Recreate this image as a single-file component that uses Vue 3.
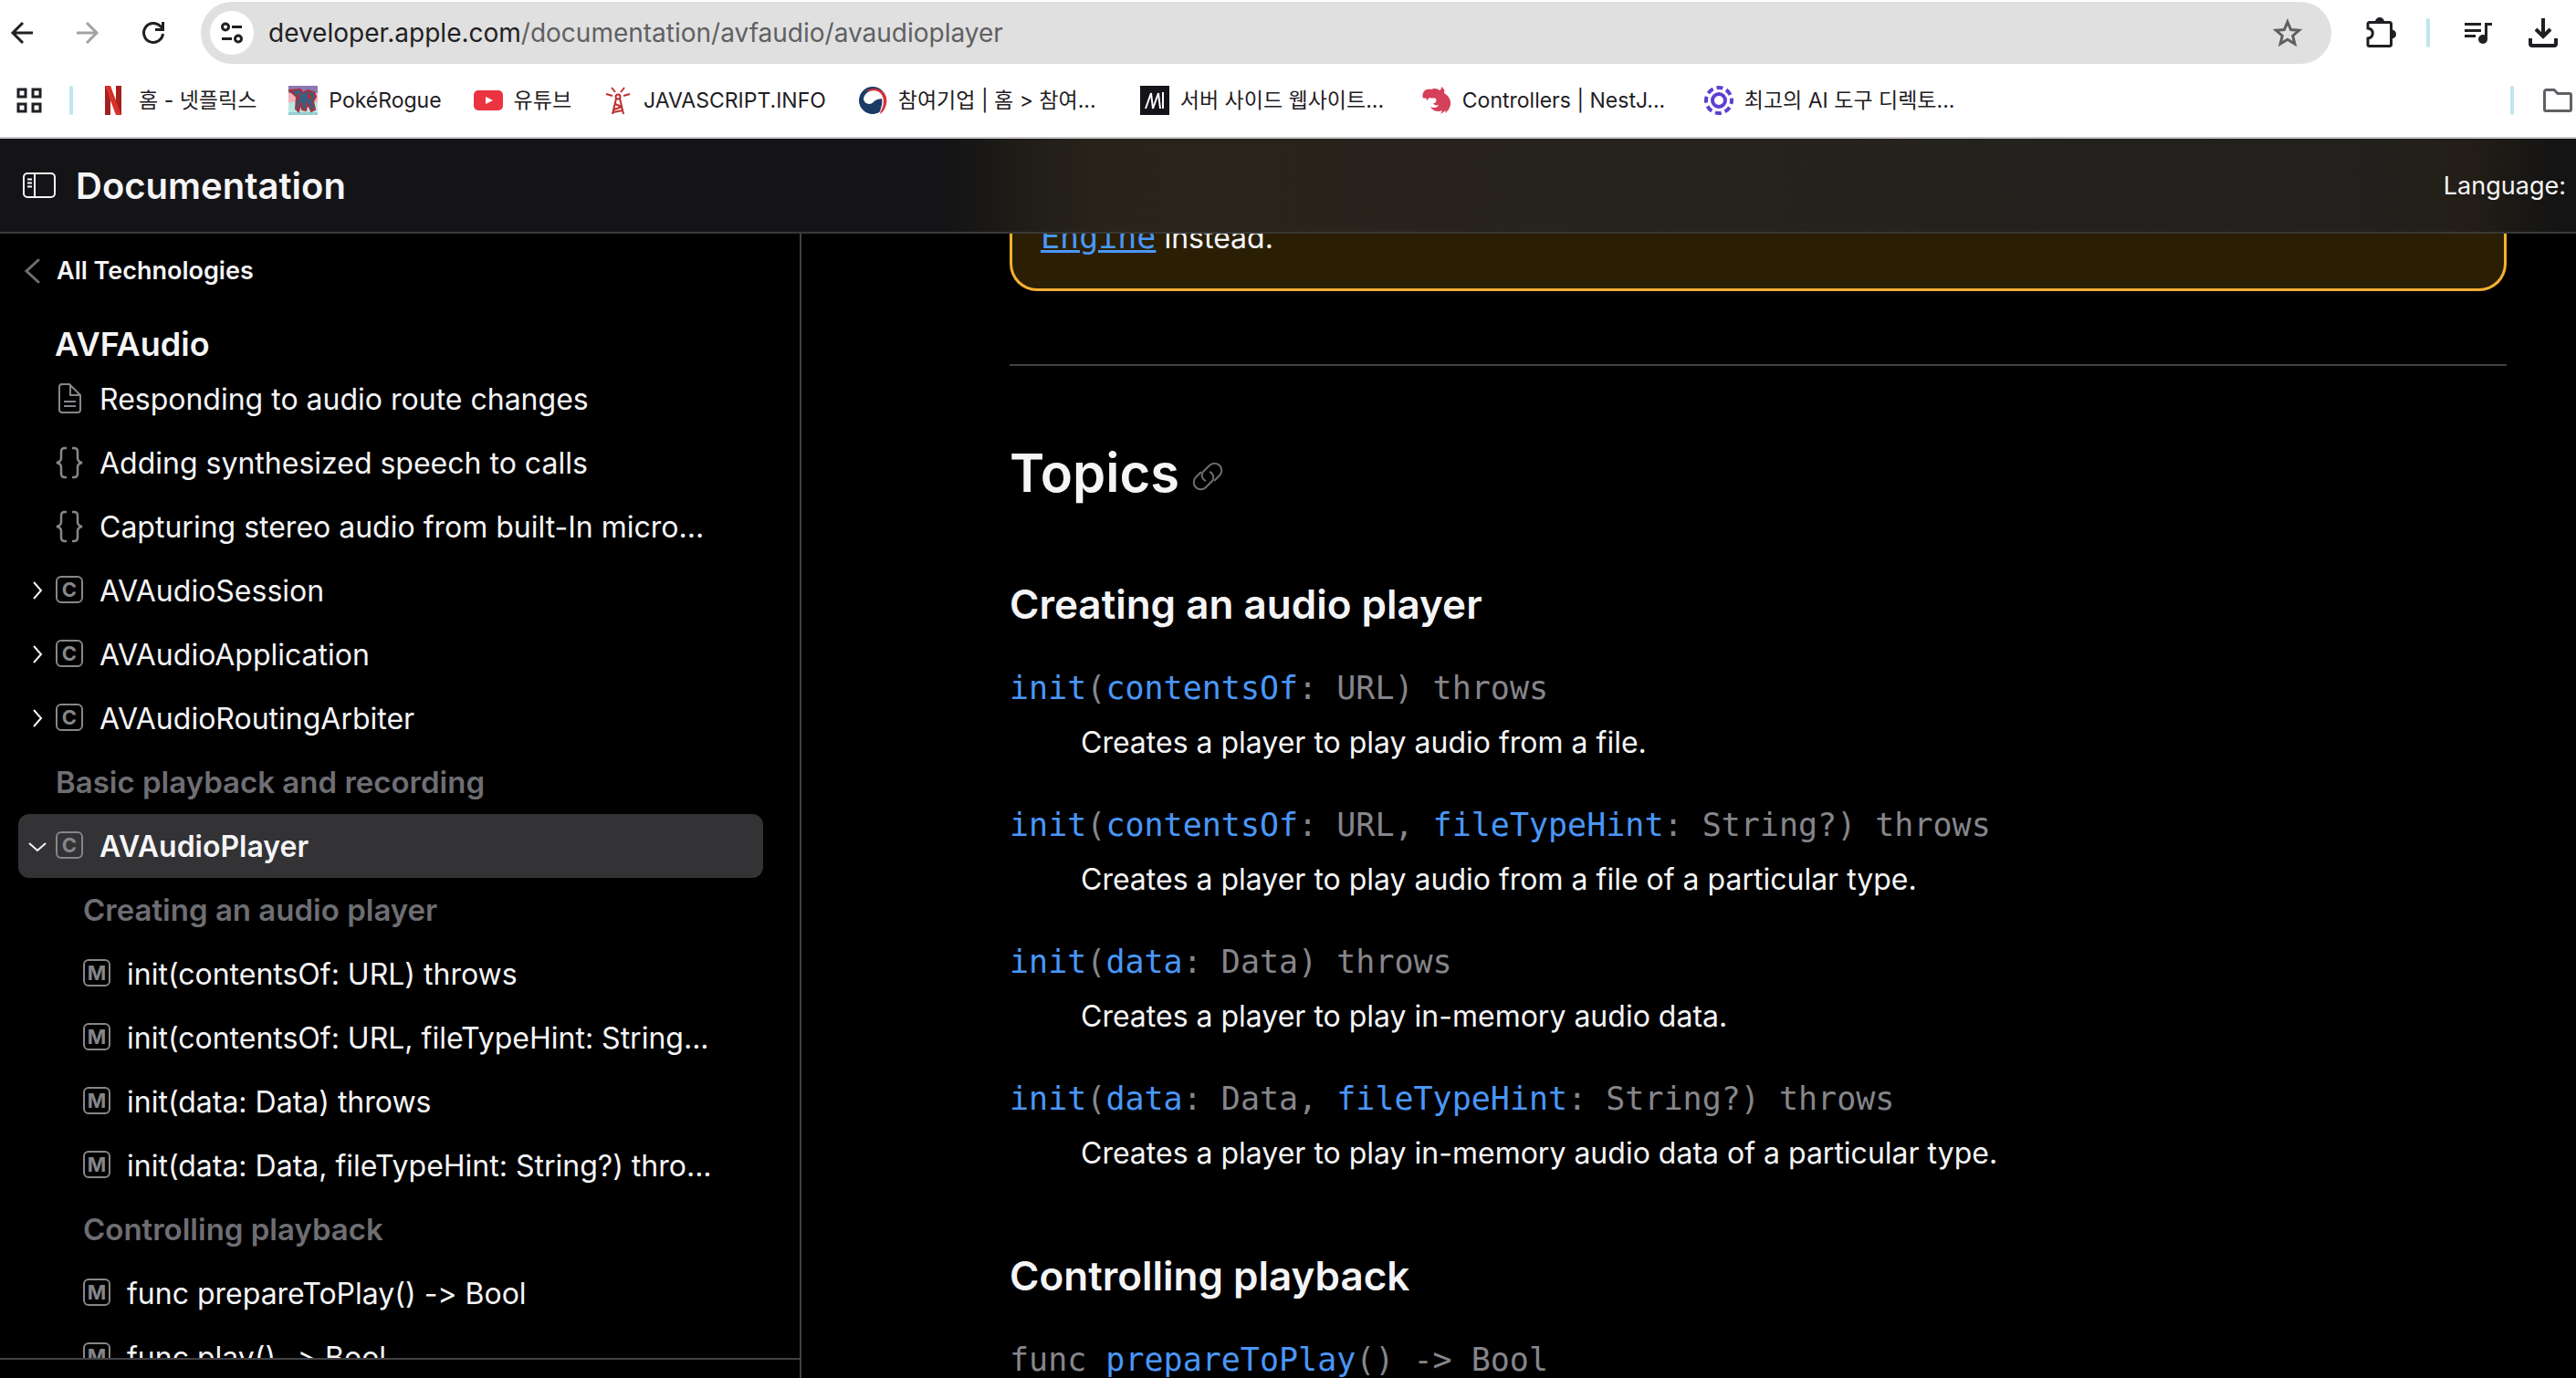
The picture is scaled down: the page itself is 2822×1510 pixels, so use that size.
<script setup>
    import { reactive } from 'vue';
    const bookmarks = [
        { icon: 'netflix', title: '홈 - 넷플릭스' },
        { icon: 'poke', title: 'PokéRogue' },
        { icon: 'youtube', title: '유튜브' },
        { icon: 'tower', title: 'JAVASCRIPT.INFO' },
        { icon: 'gov', title: '참여기업 | 홈 > 참여...', long: true },
        { icon: 'mdn', title: '서버 사이드 웹사이트...', long: true },
        { icon: 'nest', title: 'Controllers | NestJ...', long: true },
        { icon: 'ai', title: '최고의 AI 도구 디렉토...', long: true },
    ]

    const nav = reactive([
        { type: 'article', title: 'Responding to audio route changes' },
        { type: 'sample', title: 'Adding synthesized speech to calls' },
        { type: 'sample', title: 'Capturing stereo audio from built-In micro...' },
        { type: 'class', title: 'AVAudioSession', open: false },
        { type: 'class', title: 'AVAudioApplication', open: false },
        { type: 'class', title: 'AVAudioRoutingArbiter', open: false },
        { type: 'group', title: 'Basic playback and recording' },
        { type: 'class', title: 'AVAudioPlayer', open: true, active: true },
        { type: 'group', title: 'Creating an audio player', nested: true },
        { type: 'method', title: 'init(contentsOf: URL) throws', nested: true },
        { type: 'method', title: 'init(contentsOf: URL, fileTypeHint: String...', nested: true },
        { type: 'method', title: 'init(data: Data) throws', nested: true },
        { type: 'method', title: 'init(data: Data, fileTypeHint: String?) thro...', nested: true },
        { type: 'group', title: 'Controlling playback', nested: true },
        { type: 'method', title: 'func prepareToPlay() -> Bool', nested: true },
        { type: 'method', title: 'func play() -> Bool', nested: true },
    ])

    // tokens starting with * are identifiers
    const topics = [
        {
            title: 'Creating an audio player',
            items: [
                { code: ['*init', '(', '*contentsOf', ': URL) throws'], text: 'Creates a player to play audio from a file.' },
                { code: ['*init', '(', '*contentsOf', ': URL, ', '*fileTypeHint', ': String?) throws'], text: 'Creates a player to play audio from a file of a particular type.' },
                { code: ['*init', '(', '*data', ': Data) throws'], text: 'Creates a player to play in-memory audio data.' },
                { code: ['*init', '(', '*data', ': Data, ', '*fileTypeHint', ': String?) throws'], text: 'Creates a player to play in-memory audio data of a particular type.' },
            ]
        },
        {
            title: 'Controlling playback',
            items: [
                { code: ['func ', '*prepareToPlay', '() -> Bool'] },
            ]
        },
    ]
</script>
<template>
    <div class="browser">
        <div class="toolbar">
            <button class="tool" aria-label="Back">
                <svg width="32" height="32" viewBox="0 0 32 32" fill="none" stroke="#1f2023" stroke-width="3"><path d="M28 16H6M17 5L6 16l11 11" /></svg>
            </button>
            <button class="tool" aria-label="Forward">
                <svg width="32" height="32" viewBox="0 0 32 32" fill="none" stroke="#a3a3a3" stroke-width="3"><path d="M4 16h22M15 5l11 11-11 11" /></svg>
            </button>
            <button class="tool" aria-label="Reload">
                <svg width="32" height="32" viewBox="0 0 32 32" fill="none" stroke="#1f2023" stroke-width="3"><path d="M26.500 17a10.500 10.500 0 1 1-3-8.500l3 3" /><path d="M26.500 4v8.500H18" /></svg>
            </button>
            <div class="omnibox">
                <button class="site-info" aria-label="View site information">
                    <svg width="28" height="28" viewBox="0 0 28 28" fill="none" stroke="#1f2023" stroke-width="3"><circle cx="7" cy="7.500" r="3.500" /><path d="M14 7.500h11M3 20.500h11" /><circle cx="21" cy="20.500" r="3.500" /></svg>
                </button>
                <div class="url" role="textbox" aria-label="Address" contenteditable spellcheck="false">developer.apple.com<span>/documentation/avfaudio/avaudioplayer</span></div>
                <button class="star" aria-label="Bookmark this tab">
                    <svg width="36" height="36" viewBox="0 0 36 36" fill="none" stroke="#5f6063" stroke-width="3"><path d="M18 6l3.600 8.600 9 .7-6.900 5.900 2.200 8.800-7.900-4.800-7.900 4.800 2.200-8.800-6.900-5.900 9-.7z" /></svg>
                </button>
            </div>
            <button class="tool" aria-label="Extensions">
                <svg width="36" height="36" viewBox="0 0 36 36"><path d="M5 6.500h23a1.500 1.500 0 0 1 1.500 1.500v23a1.500 1.500 0 0 1-1.500 1.500H5.500A1.500 1.500 0 0 1 4 31v-7c7-1 7-10 0-11V8a1.500 1.500 0 0 1 1.500-1.500z" fill="none" stroke="#1f2023" stroke-width="3" /><path d="M12 6a5 5 0 0 1 10 0zM30 14.500a5 5 0 0 1 0 10z" fill="#1f2023" /></svg>
            </button>
            <i class="bar"></i>
            <button class="tool" aria-label="Media controls">
                <svg width="32" height="26" viewBox="0 0 32 26" fill="none" stroke="#1f2023" stroke-width="3"><path d="M2 3.500h18M2 10.500h18M2 16.500h12M25.500 20V3.500H32" /><circle cx="22" cy="20" r="5" fill="#1f2023" stroke="none" /></svg>
            </button>
            <button class="tool" aria-label="Downloads">
                <svg width="32" height="34" viewBox="0 0 32 34" fill="none" stroke="#1f2023" stroke-width="4"><path d="M16 1v20M8 13l8 8 8-8M2 23v6a2 2 0 0 0 2 2h24a2 2 0 0 0 2-2v-6" /></svg>
            </button>
        </div>
        <div class="bookmarks">
            <button class="apps" aria-label="Tab groups">
                <svg width="28" height="28" viewBox="0 0 28 28" fill="none" stroke="#1f2023" stroke-width="3"><path d="M2 2h8v8H2zM18 2h8v8h-8zM2 18h8v8H2zM18 18h8v8h-8z" /></svg>
            </button>
            <i class="bar"></i>
            <a v-for="b in bookmarks" :key="b.icon" href="#" class="bookmark">
                <svg v-if="b.icon === 'netflix'" width="32" height="32" viewBox="0 0 32 32"><path d="M7 0h6v32H7zM19 0h6v32h-6z" fill="#a3201f" /><path d="M7 0h6l12 32h-6z" fill="#d6312a" /></svg>
                <svg v-else-if="b.icon === 'poke'" width="32" height="32" viewBox="0 0 32 32"><path d="M0 0h32v8H0z" fill="#8d78b4" /><path d="M0 8h32v10H0z" fill="#f0b3b8" /><path d="M0 18h32v14H0z" fill="#b9e9e2" /><path d="M0 29h32v3H0z" fill="#93cfd4" /><path d="M1 5l12-1 3 4 5-3 7 2 2 5-3 5 2 9-4 2-4-9-2 8-4-1-1-8-3 10-3-3 1-13z" fill="#386082" stroke="#a8303c" stroke-width="2" /><path d="M12 8l-1 7M22 9l3 3-3 2z" stroke="#a8303c" fill="none" stroke-width="2" /></svg>
                <svg v-else-if="b.icon === 'youtube'" width="32" height="32" viewBox="0 0 32 32"><rect y="5" width="32" height="22" rx="5" fill="#eb3440" /><path d="M13 12l8 4-8 4z" fill="#fff" /></svg>
                <svg v-else-if="b.icon === 'tower'" width="32" height="32" viewBox="0 0 32 32" fill="none" stroke="#be2f2f" stroke-width="2"><circle cx="16" cy="12" r="2.500" /><path d="M14 14l-4 17M18 14l4 17M13 20l7 3M12 26l8-3M11 29l10-2M9 2l4 5M23 2l-4 5M3 9l7 2M29 9l-7 2" /></svg>
                <svg v-else-if="b.icon === 'gov'" width="32" height="32" viewBox="0 0 32 32"><circle cx="16" cy="16" r="15" fill="#1b3a66" /><path d="M8 6C20-2 34 7 31 20c-1 5-4 9-7 11 3-9 3-17-1-22-4-4-9-4-15-3z" fill="#d8313d" /><path d="M6 14C8 5 20 2 26 10c4 7 1 16-3 20 3-6 4-12 0-14-6-2-5 4-11 4-3 0-6-3-6-6z" fill="#fff" /><path d="M26 14c2 8-3 14-9 17-4 0-9-2-12-6l2-6 8 2 6-6z" fill="#1b3a66" /></svg>
                <svg v-else-if="b.icon === 'mdn'" width="32" height="32" viewBox="0 0 32 32"><path d="M0 0h32v32H0z" fill="#15141a" /><path d="M6 25L12 8l2 17L20 8l2 17M25 7v18" fill="none" stroke="#fff" stroke-width="2" /></svg>
                <svg v-else-if="b.icon === 'nest'" width="32" height="32" viewBox="0 0 32 32"><path d="M21 1c3 2 4 4 3 7 5 3 8 8 7 13-1 4-3 7-6 9l1-3-6 4 2-4c-5 2-10 1-13-4 4 2 8 1 9-2-3 1-5 0-6-2 3 0 4-2 3-5-2-1-5 0-7-1l-3 3-1-3-2 1c-2-1-2-4-1-6C2 4 6 3 10 4c3-2 7-1 9 1 2-1 2-2 2-4z" fill="#d5405a" /></svg>
                <svg v-else width="32" height="32" viewBox="0 0 32 32" fill="none" stroke="#5d3fd3"><circle cx="16" cy="16" r="7" stroke-width="4" /><circle cx="16" cy="16" r="14" stroke-width="4" stroke-dasharray="7 4" stroke-dashoffset="3" /></svg>
                <span class="bookmark-title" :class="{ long: b.long }">{{ b.title }}</span>
            </a>
            <i class="bar push"></i>
            <button aria-label="All bookmarks">
                <svg width="32" height="26" viewBox="0 0 32 26" fill="none" stroke="#606165" stroke-width="3"><path d="M3.500 1.500H12l4 4h13a1.500 1.500 0 0 1 1.500 1.500v16a1.500 1.500 0 0 1-1.500 1.500H3A1.500 1.500 0 0 1 1.500 23V3.500a2 2 0 0 1 2-2z" /></svg>
            </button>
        </div>

        <header class="doc-header">
            <button aria-label="Toggle sidebar">
                <svg width="36" height="28" viewBox="0 0 36 28" fill="none" stroke="#f5f5f7" stroke-width="2"><rect x="1" y="1" width="34" height="26" rx="4" /><path d="M13 1v26M5 7.500h5M5 11.500h5M5 15.500h5" /></svg>
            </button>
            <a href="#" class="doc-title">Documentation</a>
            <span class="language">Language:</span>
        </header>

        <div class="doc-body">
            <aside class="sidebar">
                <a href="#" class="back">
                    <svg width="18" height="30" viewBox="0 0 18 30" fill="none" stroke="#6e6e73" stroke-width="3" stroke-linecap="round"><path d="M16 3L3 15l13 12" /></svg>
                    All Technologies
                </a>
                <h2 class="module">AVFAudio</h2>
                <ul class="nav">
                    <li v-for="(item, index) in nav" :key="index" :class="{ active: item.active, nested: item.nested }">
                        <button v-if="item.type === 'class'" class="disclosure" :aria-label="'Toggle ' + item.title" :aria-expanded="item.open" @click="item.open = !item.open">
                            <svg width="20" height="20" viewBox="0 0 20 20" fill="none" stroke="#f5f5f7" stroke-width="2"><path :d="item.open ? 'M1 7l9 8 9-8' : 'M6 1l8 9-8 9'" /></svg>
                        </button>
                        <h3 v-if="item.type === 'group'">{{ item.title }}</h3>
                        <a v-else href="#">
                            <svg v-if="item.type === 'article'" class="glyph" viewBox="0 0 30 36"><path d="M7 2h8l12 12v16a3 3 0 0 1-3 3H7a3 3 0 0 1-3-3V5a3 3 0 0 1 3-3zM16 2v12h11M9 21h13M9 26h13" /></svg>
                            <svg v-else-if="item.type === 'sample'" class="glyph" viewBox="0 0 30 36"><path stroke-width="2.500" d="M12 2h-2Q6 2 6 6v7q0 4-5 5 5 1 5 5v7q0 4 4 4h2M18 2h2q4 0 4 4v7q0 4 5 5-5 1-5 5v7q0 4-4 4h-2" /></svg>
                            <svg v-else class="glyph" viewBox="0 0 30 36">
                                <rect x="1" y="3" width="28" height="28" rx="5" />
                                <text x="15" y="25" text-anchor="middle">{{ item.type === 'class' ? 'C' : 'M' }}</text>
                            </svg>
                            <span>{{ item.title }}</span>
                        </a>
                    </li>
                </ul>
                <div class="filter"></div>
            </aside>
            <main class="content">
                <p class="callout"><a href="#">Engine</a> instead.</p>
                <hr>
                <h2>Topics
                    <a href="#" aria-label="Link to Topics"><svg width="34" height="34" viewBox="0 0 34 34" fill="none" stroke="#6e6e73" stroke-width="2"><path d="M15 22a6.500 6.500 0 0 1-3-10l7-7a7.700 7.700 0 0 1 11 11l-6 6" /><path d="M19 12a6.500 6.500 0 0 1 3 10l-7 7A7.700 7.700 0 0 1 4 18l6-6" /></svg></a>
                </h2>
                <section v-for="topic in topics" :key="topic.title">
                    <h3>{{ topic.title }}</h3>
                    <div v-for="(item, index) in topic.items" :key="index" class="symbol">
                        <a href="#"><code><span v-for="(token, i) in item.code" :key="i" :class="{ ident: token[0] === '*' }">{{ token.replace('*', '') }}</span></code></a>
                        <p v-if="item.text">{{ item.text }}</p>
                    </div>
                </section>
            </main>
        </div>
    </div>
</template>

<style>
    body {
        background: #000;
        overflow: hidden;
    }
</style>

<style scoped>
    *
    {
        box-sizing: border-box;
        margin: 0;
        padding: 0;
    }

    a { color: inherit; text-decoration: none; }
    svg { display: block; flex: none; }
    button { background: none; border: 0; cursor: pointer; display: flex; align-items: center; justify-content: center; flex: none; }

    .browser {
        color: #f5f5f7;
        display: flex;
        flex-direction: column;
        font-family: Inter, "Noto Sans CJK KR", sans-serif;
        font-feature-settings: "calt" 0;
        height: 100vh;
    }

    /* browser chrome */

    .toolbar, .bookmarks { background: #fff; color: #1f2023; display: flex; align-items: center; flex: none; }
    .toolbar { height: 72px; padding: 0 20px 0 8px; }
    .toolbar .tool { width: 32px; }
    .toolbar .tool + .tool { margin-left: 40px; }
    .omnibox {
        align-items: center;
        background: #e0e0e0;
        border-radius: 34px;
        display: flex;
        flex: 1;
        height: 68px;
        margin: 0 38px 0 36px;
        padding: 0 30px 0 10px;
    }
    .site-info { background: #fff; border-radius: 50%; height: 48px; width: 48px; }
    .url { flex: 1; font-size: 28px; margin-left: 16px; outline: 0; white-space: nowrap; }
    .url span { color: #5f6063; }
    .bar { background: #bfe7f1; border-radius: 2px; flex: none; height: 32px; width: 4px; }
    .toolbar .bar { margin: 0 36px 0 34px; }

    .bookmarks { border-bottom: 2px solid #c7c8ca; font-size: 23px; gap: 35px; height: 80px; padding: 0 4px 2px 18px; }
    .bookmarks .apps { margin-right: -5px; }
    .apps + .bar { margin-right: -7px; }
    .bookmark { align-items: center; display: flex; flex: none; gap: 12px; line-height: 34px; }
    .bookmark-title { white-space: nowrap; }
    .bookmark-title.long { min-width: 230px; }
    .bookmarks .push { margin: 0 -3px 0 auto; }

    /* documentation header */

    .doc-header {
        align-items: center;
        background: linear-gradient(to right, #141416 1040px, #201d18 1120px, #29241b 1220px, #27231d 1700px, #22211e 2580px, #231e17 calc(100% - 120px), #141414 calc(100% - 20px));
        border-bottom: 2px solid #38383a;
        display: flex;
        flex: none;
        height: 104px;
        padding: 0 11px 0 25px;
    }
    .doc-title { font-size: 40px; font-weight: 600; margin-left: 22px; }
    .language { font-size: 27px; margin-left: auto; }

    .doc-body { display: flex; flex: 1; min-height: 0; }

    /* sidebar */

    .sidebar { border-right: 2px solid #424245; display: flex; flex: none; flex-direction: column; width: 878px; }
    .back { align-items: center; display: flex; font-size: 27px; font-weight: 600; gap: 18px; line-height: 40px; padding: 21px 0 0 26px; }
    .module { font-size: 36px; font-weight: 600; line-height: 46px; padding: 37px 0 2px 60px; }
    .nav { flex: 1; list-style: none; min-height: 0; overflow: hidden; padding: 0 40px 0 20px; }
    .nav li { align-items: center; border-radius: 12px; display: flex; font-size: 32px; height: 70px; padding-left: 41px; white-space: nowrap; }
    .nav li.nested { padding-left: 71px; }
    .nav li.active { background: #333336; font-weight: 600; }
    .nav h3 { color: #6e6e73; font-size: 33px; font-weight: 600; }
    .nav a { align-items: center; display: flex; gap: 18px; }
    .disclosure { height: 70px; margin-left: -41px; width: 41px; }
    .glyph { fill: none; height: 36px; stroke: #86868b; stroke-width: 2; width: 30px; }
    .glyph text { fill: #86868b; font-size: 22px; font-weight: 700; stroke: none; }
    .filter { border-top: 2px solid #424245; flex: none; height: 22px; }

    /* content */

    .content { flex: 1; min-width: 0; overflow: hidden; padding: 0 76px 0 228px; }
    .callout {
        background: #2a1f05;
        border: 3px solid #f5b031;
        border-radius: 0 0 30px 30px;
        border-top: 0;
        font-size: 32px;
        line-height: 50px;
        margin-top: -20px;
        padding: 0 31px 30px;
    }
    .callout a { color: #4a97f8; line-height: 1; text-decoration: underline; text-decoration-thickness: 3px; }
    .callout a, .symbol code { font-family: "DejaVu Sans Mono", monospace; font-size: 35px; }
    .content hr { border: 0; border-top: 2px solid #424245; margin: 80px 0 82px; }
    .content h2 { align-items: center; display: flex; font-size: 58px; font-weight: 600; gap: 14px; line-height: 70px; }
    .content h2 a { padding-top: 8px; }
    .content h3 { font-size: 44px; font-weight: 600; line-height: 58px; margin: 80px 0 38px; }
    .symbol { margin-bottom: 40px; }
    .symbol:last-child { margin-bottom: 0; }
    .symbol code { color: #86868b; display: block; line-height: 50px; white-space: pre; }
    .symbol .ident { color: #4a97f8; }
    .symbol p { font-size: 32px; line-height: 50px; padding: 10px 0 0 78px; }
</style>
